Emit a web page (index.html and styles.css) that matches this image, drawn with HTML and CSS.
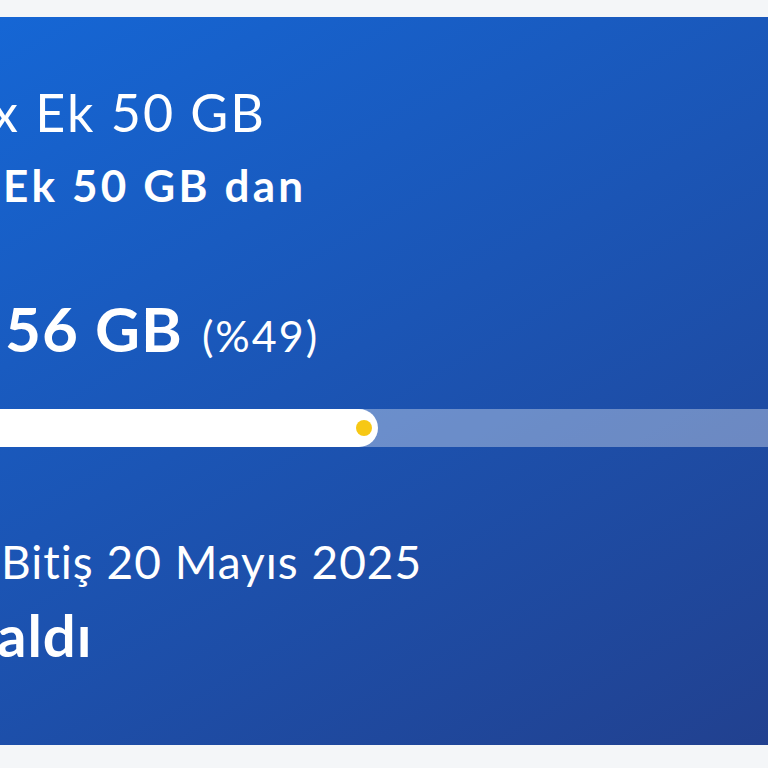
FILE: index.html
```html
<!DOCTYPE html>
<html lang="tr">
  <head>
    <meta charset="UTF-8" />
    <meta name="viewport" content="width=device-width, initial-scale=1.0" />
    <title>Paket Kullanımı</title>
    <link rel="stylesheet" href="styles.css">
  </head>

  <body>
    <main class="usage-card">
      <p class="package-name">x Ek 50 GB</p>
      <p class="package-sub">Ek 50 GB dan</p>

      <p class="remaining">56 GB <span class="percent">(%49)</span></p>

      <div class="usage-bar">
        <div class="usage-fill" style="width: 418px">
          <span class="usage-dot"></span>
        </div>
      </div>

      <p class="end-date">Bitiş 20 Mayıs 2025</p>
      <p class="days-left">aldı</p>
    </main>
  </body>
</html>
```

FILE: styles.css
```css
body {
  font-family: "Lato", "Noto Sans", sans-serif;
  margin: 0;
  padding-top: 17px;
  background-color: #f4f6f8;
  overflow: hidden;
}

.usage-card {
  margin-left: -40px;
  width: 900px;
  height: 728px;
  box-sizing: border-box;
  padding: 69px 0 0 40px;
  background: linear-gradient(150deg, #1567d6 0%, #1b55b5 45%, #223f8c 100%);
  color: #ffffff;
  overflow: hidden;
}

.usage-card p {
  margin: 0;
  line-height: 1;
  white-space: nowrap;
}

.package-name {
  font-size: 52px;
  letter-spacing: 2px;
  margin-left: -8px !important;
}

.package-sub {
  font-size: 44px;
  font-weight: bold;
  letter-spacing: 3.2px;
  margin-top: 25px !important;
  margin-left: 3px !important;
}

.remaining {
  font-size: 62px;
  font-weight: bold;
  letter-spacing: 1px;
  margin-top: 90px !important;
  margin-left: 5px !important;
}

.percent {
  font-size: 43px;
  font-weight: normal;
  letter-spacing: 2px;
  margin-left: 3px;
}

.usage-bar {
  margin-top: 50px;
  margin-left: -40px;
  height: 38px;
  border-radius: 19px;
  background-color: rgba(255, 255, 255, 0.35);
}

.usage-fill {
  position: relative;
  height: 100%;
  border-radius: 19px;
  background-color: #ffffff;
}

.usage-dot {
  position: absolute;
  right: 6px;
  top: 11px;
  width: 16px;
  height: 16px;
  border-radius: 50%;
  background-color: #f7c815;
}

.end-date {
  font-size: 46px;
  letter-spacing: 1px;
  margin-top: 92px !important;
  margin-left: 1px !important;
}

.days-left {
  font-size: 58px;
  font-weight: bold;
  letter-spacing: 1px;
  margin-top: 21px !important;
  margin-left: -3px !important;
}
```
